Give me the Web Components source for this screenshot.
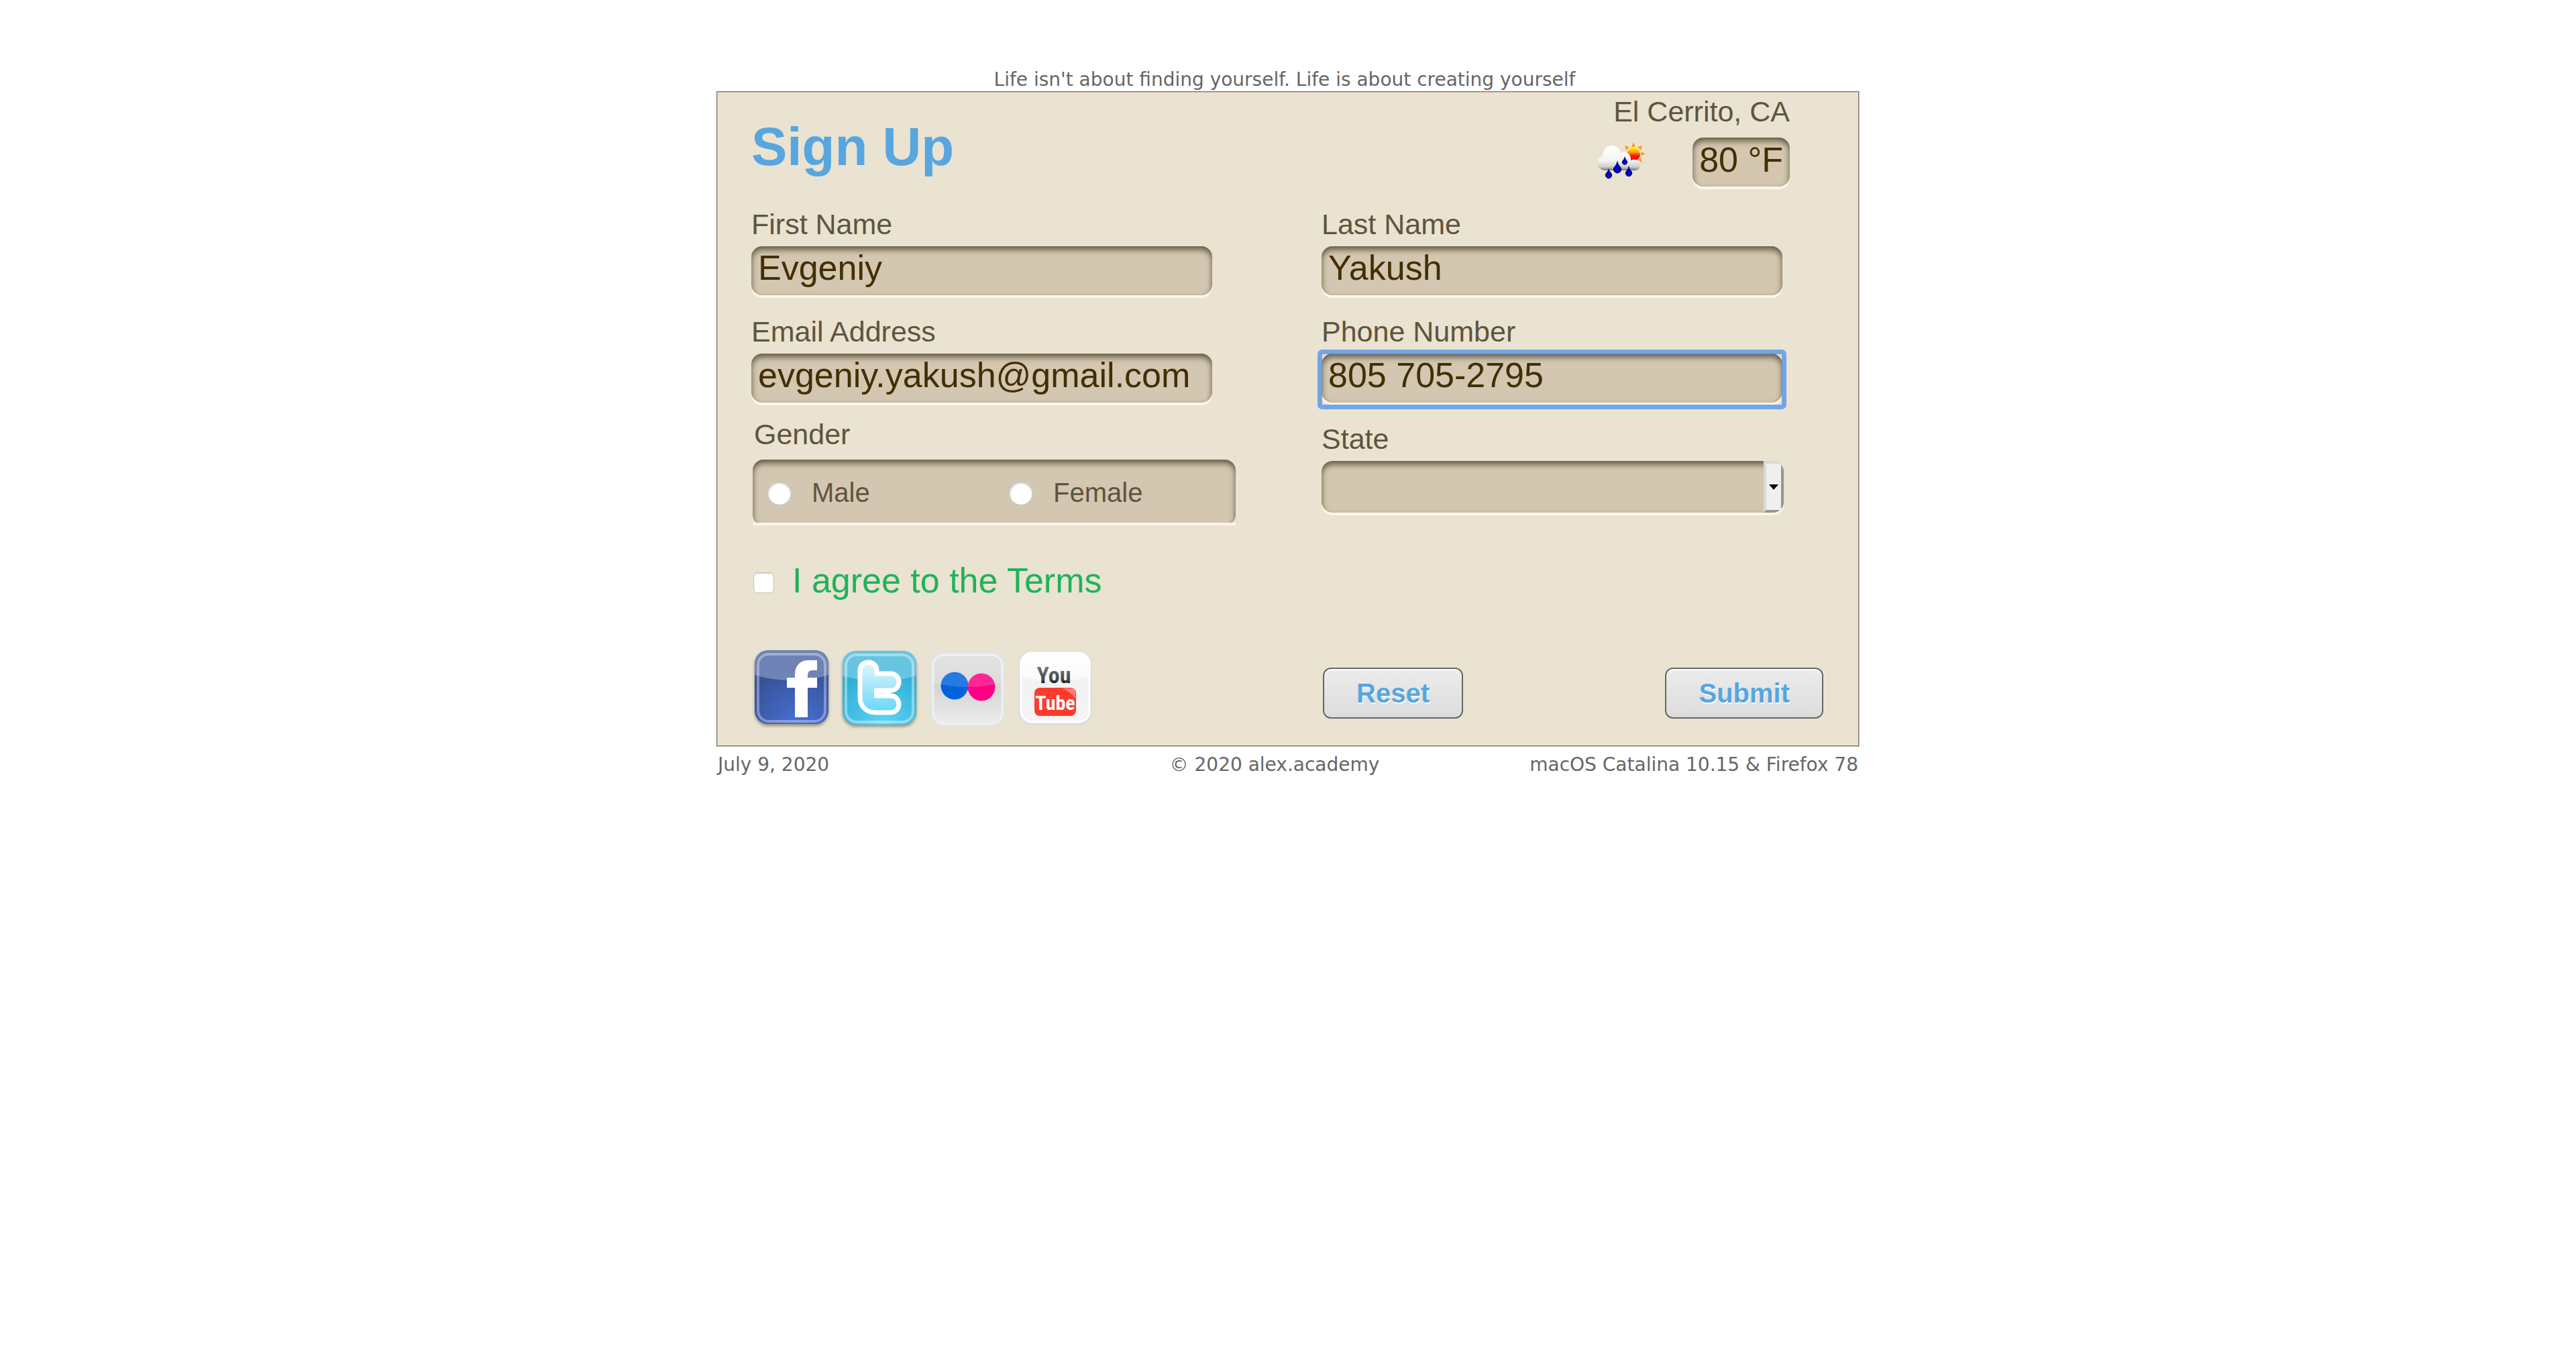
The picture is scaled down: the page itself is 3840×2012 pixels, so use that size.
<!DOCTYPE html>
<html lang="en">
<head>
<meta charset="utf-8">
<title>Sign Up</title>
<style>
  body {
    margin: 0;
    background: #fff;
    font-family: "Liberation Sans", Arial, sans-serif;
    color: #5f543e;
    --field: #d3c7b1;
    --ink: #442e00;
    --blue: #57a6df;
    --sunken: inset 0 5px 10px #5f563e, 0 4px 0 #fff6e5;
  }
</style>
</head>
<body>
<signup-page></signup-page>

<template id="t-page">
  <style>
    :host { display: block; padding-top: 101px; }
    .wrap { width: min(100%, 1704px); margin: 0 auto; }
    .quote, footer { font: 28px/35px "DejaVu Sans", Verdana, sans-serif; color: #666; }
    .quote { margin: 0; padding-right: 10px; text-align: center; }
    form { box-sizing: border-box; border: 2px groove #cbbfae; background: #eae3d1; padding-bottom: 28px; }
    header { display: flex; justify-content: space-between; align-items: flex-start; padding: 4px 102px 0 50px; height: 168px; }
    h1 { margin: 31px 0 0; font-size: 80px; line-height: 92px; color: var(--blue); }
    .cols { display: grid; grid-template-columns: 1fr 1fr; }
    .col { padding-left: 50px; display: flex; flex-direction: column; gap: 30px; }
    gender-field { margin: -7px 0 0 2px; }
    terms-check { padding: 52px 0 0 53px; }
    .social { display: flex; gap: 21px; padding: 74px 0 0 55px; height: 114px; }
    .actions { display: flex; justify-content: space-between; align-items: flex-start; padding: 100px 52px 0; }
    footer { display: grid; grid-template-columns: 1fr 1fr 1fr; padding: 9px 2px 0; white-space: nowrap; }
    footer span:nth-child(2) { text-align: center; padding-right: 40px; }
    footer span:nth-child(3) { text-align: right; }
  </style>
  <div class="wrap">
    <p class="quote">Life isn't about finding yourself. Life is about creating yourself</p>
    <form>
      <header>
        <h1>Sign Up</h1>
        <weather-badge>El Cerrito, CA<span slot="temp">80 °F</span></weather-badge>
      </header>
      <div class="cols">
        <div class="col">
          <text-field label="First Name" value="Evgeniy"></text-field>
          <text-field label="Email Address" type="email" value="evgeniy.yakush@gmail.com"></text-field>
          <gender-field></gender-field>
        </div>
        <div class="col">
          <text-field label="Last Name" value="Yakush"></text-field>
          <text-field label="Phone Number" type="tel" value="805 705-2795" active></text-field>
          <state-field></state-field>
        </div>
      </div>
      <terms-check>I agree to the Terms</terms-check>
      <div class="cols">
        <div class="social">
          <social-link name="facebook"></social-link>
          <social-link name="twitter"></social-link>
          <social-link name="flickr"></social-link>
          <social-link name="youtube"></social-link>
        </div>
        <div class="actions">
          <push-button type="reset">Reset</push-button>
          <push-button type="submit">Submit</push-button>
        </div>
      </div>
    </form>
    <footer><span>July 9, 2020</span><span>© 2020 alex.academy</span><span>macOS Catalina 10.15 &amp; Firefox 78</span></footer>
  </div>
</template>

<template id="t-weather">
  <style>
    :host { display: flex; flex-direction: column; align-items: flex-end; gap: 15px; font-size: 43px; line-height: 48px; }
    .row { display: flex; align-items: flex-start; gap: 64px; }
    svg { width: 80px; height: 64px; margin-top: 6px; overflow: visible; }
    .temp { font-size: 52px; line-height: 58px; padding: 4px 10px 11px; border-radius: 16px; background: var(--field); color: var(--ink); box-shadow: var(--sunken); }
  </style>
  <div><slot></slot></div>
  <div class="row">
    <svg viewBox="0 0 80 64" aria-hidden="true">
      <defs>
        <linearGradient id="sun" x1="0" y1="0" x2="0" y2="1"><stop offset="0" stop-color="#fff200"/><stop offset=".35" stop-color="#ff9a10"/><stop offset=".6" stop-color="#ff1808"/><stop offset="1" stop-color="#ff0000"/></linearGradient>
        <linearGradient id="cl" x1="0" y1="0" x2="0" y2="1"><stop offset="0" stop-color="#fff"/><stop offset=".6" stop-color="#f4f4f4"/><stop offset=".85" stop-color="#cfcfcf"/><stop offset="1" stop-color="#777"/></linearGradient>
        <radialGradient id="dr" cx=".5" cy=".65" r=".6"><stop offset="0" stop-color="#0000d8"/><stop offset="1" stop-color="#000070"/></radialGradient>
      </defs>
      <g fill="#ff9c10">
        <path d="M56 1l3 7h-6zM69 6l-2 7-5-5zM74 18l-7 3v-6zM69 32l-6-5 4-3zM43 6l2 7 5-5z"/>
      </g>
      <circle cx="56" cy="19" r="10" fill="url(#sun)"/>
      <path d="M12 43C5 41 1 36 2 30c1-5 4-7 8-9C11 11 16 6 23 6c8 0 13 5 14 11 7-4 14 0 15 8q0 0 0 3c8-4 14 2 14 8 0 4-4 7-8 7z" fill="url(#cl)"/>
      <g fill="url(#dr)">
        <path d="M32 28Q33 34 37 38A6 6 0 1 1 27 38Q31 34 32 28z"/>
        <path d="M43 22Q44 26 46 28A4 4 0 1 1 40 28Q42 26 43 22z"/>
        <path d="M19 40Q20 44 23 47A5 5 0 1 1 15 47Q18 44 19 40z"/>
        <path d="M49 36Q50 41 53 44A5 5 0 1 1 45 44Q48 41 49 36z"/>
      </g>
    </svg>
    <div class="temp"><slot name="temp"></slot></div>
  </div>
</template>

<template id="t-text">
  <style>
    :host { display: flex; flex-direction: column; gap: 9px; max-width: 687px; }
    label { font-size: 43px; line-height: 48px; }
    .box { position: relative; display: flex; }
    input { box-sizing: border-box; width: 100%; height: 73px; margin: 0; border: 0; padding: 3px 10px 12px; border-radius: 16px; background: var(--field); box-shadow: var(--sunken); font: 52px/58px "Liberation Sans", Arial, sans-serif; color: var(--ink); outline: none; }
    :host([active]) .box::after { content: ""; position: absolute; inset: -6px -6px -10px; border: 7px solid rgba(74, 144, 236, .75); border-radius: 7px; pointer-events: none; }
  </style>
  <label for="f"></label>
  <div class="box"><input id="f"></div>
</template>

<template id="t-state">
  <style>
    :host { display: flex; flex-direction: column; gap: 9px; max-width: 689px; }
    label { font-size: 43px; line-height: 48px; }
    .box { display: grid; grid-template-columns: 1fr 30px; height: 77px; border-radius: 16px; overflow: hidden; box-shadow: 0 4px 0 #fff6e5; }
    select { appearance: none; grid-area: 1 / 1 / 2 / 3; margin: 0; border: 0; border-radius: 16px; padding: 0 40px 0 10px; background: var(--field); box-shadow: var(--sunken); font: 52px "Liberation Sans", Arial, sans-serif; color: var(--ink); }
    .arrow { grid-area: 1 / 2; display: grid; place-items: center; background: #efefef; border: 4px solid; border-color: #dadada #959595 #959595 #dadada; pointer-events: none; }
    svg { width: 14px; height: 8px; }
  </style>
  <label for="s">State</label>
  <div class="box">
    <select id="s"><option></option></select>
    <span class="arrow"><svg viewBox="0 0 14 8"><path d="M0 0h14L7 8z"/></svg></span>
  </div>
</template>

<template id="t-gender">
  <style>
    :host { display: block; max-width: 720px; }
    fieldset { margin: 0; border: 0; padding: 0; min-width: 0; }
    legend { padding: 0 2px; font-size: 43px; line-height: 48px; }
    .box { position: relative; box-sizing: border-box; height: 98px; margin-top: 14px; border-radius: 16px; background: var(--field); box-shadow: inset 0 5px 10px #5f563e; display: grid; grid-template-columns: 1fr 1fr; padding: 0 0 0 22px; column-gap: 22px; font-size: 40px; line-height: 46px; align-items: center; }
    .box::after { content: ""; position: absolute; left: 0; right: 0; bottom: 0; height: 4px; background: #fff6e5; }
    label { display: flex; align-items: center; gap: 30px; }
    input { appearance: none; box-sizing: border-box; flex: none; width: 36px; height: 36px; margin: 2px 0 0; border-radius: 50%; background: #fff; border: 1px solid #c5c0b8; box-shadow: inset 0 2px 3px rgba(0, 0, 0, .25); }
  </style>
  <fieldset>
    <legend>Gender</legend>
    <div class="box">
      <label><input type="radio" name="gender" value="m">Male</label>
      <label><input type="radio" name="gender" value="f">Female</label>
    </div>
  </fieldset>
</template>

<template id="t-terms">
  <style>
    :host { display: block; }
    label { display: inline-flex; align-items: center; gap: 27px; font-size: 52px; line-height: 60px; color: #20b25a; }
    input { appearance: none; box-sizing: border-box; width: 31px; height: 31px; margin: 6px 0 0; border-radius: 6px; background: #fff; border: 1px solid #c9c4bb; box-shadow: inset 0 1px 2px rgba(0, 0, 0, .2); }
  </style>
  <label><input type="checkbox"><span><slot></slot></span></label>
</template>

<template id="t-button">
  <style>
    :host { display: block; }
    button { display: block; margin: 0; height: 76px; padding: 0 48px; border: 2px solid #666; border-radius: 12px; background: linear-gradient(#ececec, #dcdcdc); box-shadow: inset 0 2px 0 #fff; font: bold 40px/46px "Liberation Sans", Arial, sans-serif; color: var(--blue); text-shadow: 1px 2px 0 #fff; }
  </style>
  <button><slot></slot></button>
</template>

<script>
  const clone = id => document.getElementById(id).content.cloneNode(true);

  class TemplateElement extends HTMLElement {
    connectedCallback() {
      if (this.shadowRoot) return;
      this.attachShadow({ mode: "open" }).append(clone(this.constructor.template));
      this.ready();
    }
    ready() {}
  }

  class WeatherBadge extends TemplateElement { static template = "t-weather"; }
  class StateField extends TemplateElement { static template = "t-state"; }
  class GenderField extends TemplateElement { static template = "t-gender"; }
  class TermsCheck extends TemplateElement { static template = "t-terms"; }
  class SignupPage extends TemplateElement { static template = "t-page"; }

  class TextField extends TemplateElement {
    static template = "t-text";
    ready() {
      const input = this.shadowRoot.querySelector("input");
      this.shadowRoot.querySelector("label").textContent = this.getAttribute("label");
      input.type = this.getAttribute("type") || "text";
      input.value = this.getAttribute("value") || "";
    }
  }

  class PushButton extends TemplateElement {
    static template = "t-button";
    ready() { this.shadowRoot.querySelector("button").type = this.getAttribute("type"); }
  }

  // Glossy square tiles; the upper part carries a curved highlight.
  const gloss = (o) => `<path d="M0 37V20A20 20 0 0 1 20 0H90A20 20 0 0 1 110 20V37Q55 53 0 37z" fill="#fff" opacity="${o}"/>`;
  const ring = (o) => `<rect x="5" y="6" width="100" height="100" rx="16" fill="none" stroke="#fff" stroke-width="4" opacity="${o}"/>`;
  const tiles = {
    facebook: `
      <defs><radialGradient id="g" cx=".6" cy="1" r=".75"><stop offset="0" stop-color="#4a70d6"/><stop offset="1" stop-color="#375399"/></radialGradient></defs>
      <rect width="110" height="110" rx="20" fill="url(#g)"/>${gloss(.28)}${ring(.35)}
      <path d="M60 100V56H48V41H60V36C60 22 69 15 80 15H93V30H86C81 30 79 33 79 38V41H93V56H79V100z" fill="#fff"/>`,
    twitter: `
      <defs><radialGradient id="g" cx=".55" cy="1" r=".75"><stop offset="0" stop-color="#5ed4f4"/><stop offset="1" stop-color="#2fafd6"/></radialGradient>
      <linearGradient id="h" x1="0" y1="0" x2="0" y2="1"><stop offset="0" stop-color="#e2f7fd"/><stop offset="1" stop-color="#66d6f6"/></linearGradient></defs>
      <rect y="1" width="110" height="110" rx="20" fill="url(#g)"/><g transform="translate(0 1)">${gloss(.28)}${ring(.4)}</g>
      <path d="M26 30C26 14 51 14 51 30V35H72C88 35 88 60 72 60H51V68H72C88 68 88 93 72 93H50C35 93 26 84 26 70z" fill="url(#h)" stroke="#fff" stroke-width="7" stroke-linejoin="round"/>
      <path d="M47 57H76L72 64L76 71H47z" fill="#fff"/>`,
    flickr: `
      <defs><linearGradient id="g" x1="0" y1="0" x2="0" y2="1"><stop offset="0" stop-color="#dedede"/><stop offset=".5" stop-color="#d6d6d6"/><stop offset="1" stop-color="#ececec"/></linearGradient></defs>
      <g transform="translate(-1 2)"><rect width="113" height="113" rx="19" fill="#e3e3e3"/>
      <rect x="5" y="5" width="103" height="103" rx="16" fill="url(#g)" stroke="#f0f0f0" stroke-width="3"/>
      <circle cx="37" cy="51" r="20.5" fill="#0063dc"/><circle cx="77" cy="53" r="20.5" fill="#ff0084"/>
      <path d="M4 46V22A18 18 0 0 1 22 4H91A18 18 0 0 1 109 22V46Q56 60 4 46z" fill="#fff" opacity=".15"/></g>`,
    youtube: `
      <defs><linearGradient id="g" x1="0" y1="0" x2="0" y2="1"><stop offset="0" stop-color="#fff"/><stop offset=".45" stop-color="#f1f2f2"/><stop offset="1" stop-color="#f5f5f5"/></linearGradient>
      <linearGradient id="y" x1="0" y1="0" x2="0" y2="1"><stop offset="0" stop-color="#888"/><stop offset=".7" stop-color="#444"/><stop offset=".8" stop-color="#111"/></linearGradient></defs>
      <rect y="1" width="110" height="111" rx="20" fill="#dedede"/>
      <rect x="4" y="4" width="102" height="103" rx="16" fill="url(#g)" stroke="#fff" stroke-width="3"/>
      <path d="M2 39V22A18 18 0 0 1 20 3H90A18 18 0 0 1 108 22V39Q55 52 2 39z" fill="#fff" opacity=".5"/>
      <rect x="24" y="56" width="62" height="42" rx="8" fill="#ff3a2d"/>
      <path d="M66 57H79Q85 57 85 63V72Q78 62 66 57z" fill="#fff" opacity=".35"/>
      <g font-family="'Roboto Condensed','Liberation Sans Narrow','Liberation Sans',sans-serif" font-weight="bold" text-anchor="middle">
        <text x="53" y="49" font-size="34" fill="url(#y)">You</text>
        <text x="55" y="89" font-size="30" fill="#fff">Tube</text>
      </g>`
  };

  class SocialLink extends HTMLElement {
    connectedCallback() {
      if (this.shadowRoot) return;
      const name = this.getAttribute("name");
      this.attachShadow({ mode: "open" }).innerHTML = `
        <style>
          :host { display: block; }
          a { display: block; }
          svg { display: block; width: 110px; height: 110px; overflow: visible; }
          .shade { filter: drop-shadow(0 3px 2px rgba(70, 60, 50, .5)); }
        </style>
        <a href="#${name}" aria-label="${name}"><svg class="${/facebook|twitter/.test(name) ? "shade" : ""}" viewBox="0 0 110 110">${tiles[name]}</svg></a>`;
    }
  }

  customElements.define("weather-badge", WeatherBadge);
  customElements.define("text-field", TextField);
  customElements.define("state-field", StateField);
  customElements.define("gender-field", GenderField);
  customElements.define("terms-check", TermsCheck);
  customElements.define("push-button", PushButton);
  customElements.define("social-link", SocialLink);
  customElements.define("signup-page", SignupPage);
</script>
</body>
</html>
